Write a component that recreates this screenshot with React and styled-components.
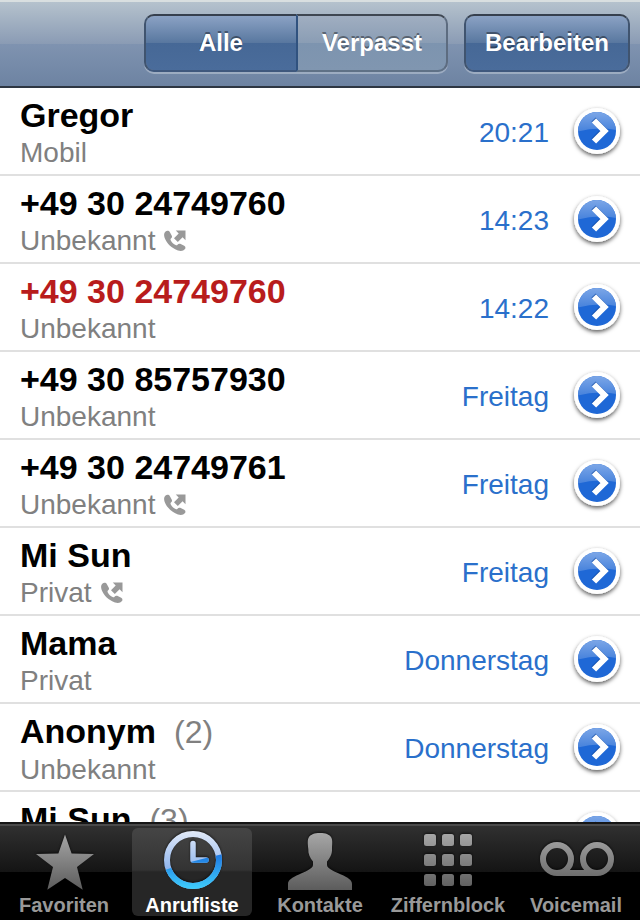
import React, { useState } from 'react'
import styled, { createGlobalStyle } from 'styled-components'

const GlobalStyle = createGlobalStyle`
  * {
    box-sizing: border-box;
  }
  body {
    margin: 0;
    background: #fff;
    font-family: "Liberation Sans", Arial, sans-serif;
  }
  button {
    margin: 0;
    padding: 0;
    border: 0;
    background: none;
    font-family: inherit;
    cursor: pointer;
  }
`

const Screen = styled.div`
  display: flex;
  flex-direction: column;
  height: 100vh;
`

const Toolbar = styled.header`
  display: flex;
  justify-content: flex-end;
  gap: 16px;
  padding: 12px 10px 14px;
  border-top: 2px solid #d9dfe0;
  border-bottom: 2px solid #2d3642;
  background: linear-gradient(#b5c2cd 0%, #8a9bb4 50%, #7f93b0 50%, #6d83a2 100%);
`

const glossyBlue = 'linear-gradient(#8ba2c4 0%, #58779f 50%, #466896 50%, #4a6c9b 100%)'
const glossyGrey = 'linear-gradient(#a0aec1 0%, #8a9db4 50%, #7d94af 50%, #8096b0 100%)'

const Segments = styled.div`
  display: flex;
  border-radius: 10px;
  box-shadow: 0 2px 0 rgba(255, 255, 255, 0.3);
`

const ToolbarButton = styled.button`
  height: 58px;
  padding: 0 19px;
  border: 2px solid;
  border-color: #36404e #40546f #3f587d;
  border-radius: 10px;
  background: ${glossyBlue} padding-box;
  box-shadow: 0 2px 0 rgba(255, 255, 255, 0.3);
  color: #fff;
  font-size: 24px;
  font-weight: bold;
  line-height: 54px;
  text-shadow: 0 -2px 0 rgba(0, 0, 0, 0.4);
`

const Segment = styled(ToolbarButton)`
  width: 152px;
  padding: 0;
  background: ${props => (props.$active ? glossyBlue : glossyGrey)} padding-box;
  border-color: ${props => (props.$active ? '#36404e #40546f #3f587d' : '#3f4752 #5d6c80 #5f7186')};
  box-shadow: none;

  &:first-child {
    border-right: 0;
    border-radius: 10px 0 0 10px;
  }
  &:last-child {
    border-left: 2px solid #30527f;
    border-radius: 0 10px 10px 0;
  }
`

const CallList = styled.ul`
  flex: 1;
  min-height: 0;
  margin: 0;
  padding: 0;
  overflow: hidden;
  list-style: none;
`

const CallRow = styled.li`
  display: flex;
  align-items: center;
  height: 88px;
  padding: 0 19px 0 20px;
  border-bottom: 2px solid #e0e0e0;
`

const Caller = styled.div`
  flex: 1;
  padding-top: 6px;
`

const Name = styled.div`
  display: flex;
  align-items: baseline;
  gap: 18px;
  color: ${props => (props.$missed ? '#b81c1c' : '#000')};
  font-size: 34px;
  font-weight: bold;
  line-height: 38px;
`

const Count = styled.span`
  color: #808080;
  font-size: 32px;
  font-weight: normal;
`

const Kind = styled.div`
  display: flex;
  align-items: center;
  gap: 9px;
  color: #808080;
  font-size: 28px;
  line-height: 38px;
`

const Time = styled.time`
  padding-top: 4px;
  color: #2a70cb;
  font-size: 28px;
  line-height: 32px;
`

const DetailButton = styled.button`
  display: flex;
  align-items: center;
  justify-content: center;
  width: 48px;
  height: 48px;
  margin-left: 24px;
`

const TabBar = styled.nav`
  display: flex;
  height: 98px;
  padding-top: 2px;
  border-top: 2px solid #161616;
  background: linear-gradient(#4a4a4a 0 2px, #303030 2px, #141414 48px, #000 48px);
`

const Tab = styled.button`
  display: flex;
  flex: 1;
  flex-direction: column;
  align-items: center;
  justify-content: flex-start;
  height: 88px;
  margin: 2px 4px 0;
  border-radius: 6px;
  background: ${props => (props.$active ? 'linear-gradient(#454545 0, #333 42px, #262626 44px, #262626 100%)' : 'none')};
  color: ${props => (props.$active ? '#fff' : '#999')};
  font-size: 20px;
  font-weight: bold;
  line-height: 26px;
`

const TabIcon = styled.svg`
  display: block;
  flex: none;
  width: 80px;
  height: 64px;
  overflow: visible;
  filter: drop-shadow(0 -1px 1px rgba(0, 0, 0, 0.6));
`

const calls = [
  { name: 'Gregor', kind: 'Mobil', time: '20:21' },
  { name: '+49 30 24749760', kind: 'Unbekannt', time: '14:23', outgoing: true },
  { name: '+49 30 24749760', kind: 'Unbekannt', time: '14:22', missed: true },
  { name: '+49 30 85757930', kind: 'Unbekannt', time: 'Freitag' },
  { name: '+49 30 24749761', kind: 'Unbekannt', time: 'Freitag', outgoing: true },
  { name: 'Mi Sun', kind: 'Privat', time: 'Freitag', outgoing: true },
  { name: 'Mama', kind: 'Privat', time: 'Donnerstag' },
  { name: 'Anonym', count: 2, kind: 'Unbekannt', time: 'Donnerstag' },
  { name: 'Mi Sun', count: 3, kind: 'Privat', time: 'Donnerstag' },
]

const OutgoingIcon = () => (
  <svg width="22" height="22" viewBox="0 0 22 22" fill="#999" role="img" aria-label="Ausgehend">
    <path d="M1.6 1.5 C3 .4 5.2 .8 5.9 2.2 L7.8 5.8 C8.3 6.9 7.9 7.8 6.9 8.5 C6.4 9 6.4 9.6 6.8 10.4 C7.9 12.4 9.6 14 11.6 15 C12.4 15.4 13 15.3 13.5 14.7 C14.3 13.7 15.2 13.4 16.2 13.8 L20.2 15.8 C21.5 16.5 21.8 18 21 19.1 C19.4 21.1 16.8 21.4 14 20.5 C7.8 18.3 2.6 13.4 .6 7.8 C-.3 5.2 0 2.8 1.6 1.5 Z" />
    <path d="M11.8 .5 H21.5 V10.2 L18.6 7.3 L13.8 12 L10 8.2 L14.7 3.4 Z" />
  </svg>
)

const DetailIcon = () => (
  <svg width="48" height="48" viewBox="0 0 48 48" overflow="visible" aria-hidden="true">
    <defs>
      <linearGradient id="gloss" x1="0" y1="0" x2="0" y2="1">
        <stop offset="0" stopColor="#8ab0ea" />
        <stop offset="1" stopColor="#427fdb" />
      </linearGradient>
      <clipPath id="disc">
        <circle cx="24" cy="24" r="19" />
      </clipPath>
      <filter id="shade" x="-30%" y="-30%" width="160%" height="170%">
        <feDropShadow dx="0" dy="2" stdDeviation="2" floodColor="#000" floodOpacity="0.65" />
      </filter>
    </defs>
    <circle cx="24" cy="24" r="23" fill="#fff" filter="url(#shade)" />
    <circle cx="24" cy="24" r="19" fill="#1f68d6" />
    <path d="M0 0 H48 V24 Q24 18 0 26 Z" fill="url(#gloss)" clipPath="url(#disc)" />
    <path d="M20.5 12.5 L31 23 L20.5 33.5" fill="none" stroke="#134a9f" strokeOpacity="0.6" strokeWidth="6" />
    <path d="M21 13.5 L31.5 24 L21 34.5" fill="none" stroke="#fff" strokeWidth="6" />
  </svg>
)

const StarIcon = () => (
  <path
    fill="url(#tabGrey)"
    d="M41 6.5 L47.6 25.6 L70 26 L53 39 L58.7 61.7 L41 50 L23.3 61.7 L29 39 L12 26 L34.4 25.6 Z"
  />
)

const ClockIcon = () => (
  <g fill="none" strokeLinecap="round" strokeLinejoin="round">
    <clipPath id="clockLower">
      <path d="M0 46.5 Q34 33.5 80 24 V72 H0 Z" />
    </clipPath>
    <g stroke="url(#clockLight)" strokeWidth="6">
      <circle cx="41" cy="32" r="26" />
      <path d="M41 15.5 V32 H54" strokeWidth="5.5" />
    </g>
    <g stroke="url(#clockBlue)" strokeWidth="6" clipPath="url(#clockLower)">
      <circle cx="41" cy="32" r="26" />
      <path d="M41 15.5 V32 H54" strokeWidth="5.5" />
    </g>
  </g>
)

const PersonIcon = () => (
  <path
    fill="url(#tabGrey)"
    d="M40 5 C46 5 49 6.5 51 9 C53 12 52 17 52 21 C52.3 26 50 30 47 33.5 V37 C47 41 56 44 61 46.5 C68 49.5 72 52 72 56 V62 H8 V56 C8 52 12 49.5 19 46.5 C24 44 33 41 33 37 V33.5 C30 30 28 26 28.3 21 C28 17 27 12 29 9 C31 6.5 34 5 40 5 Z"
  />
)

const KeypadIcon = () => (
  <g fill="url(#tabGrey)">
    {[6, 26, 46].map(y =>
      [16, 34, 52].map(x => <rect key={x + '-' + y} x={x} y={y} width="12" height="12" rx="2.5" />)
    )}
  </g>
)

const VoicemailIcon = () => (
  <g fill="none" stroke="url(#tabGrey)" strokeWidth="6">
    <circle cx="21" cy="31" r="14" />
    <circle cx="61" cy="31" r="14" />
    <path d="M21 42 H61 V48 H21 Z" fill="url(#tabGrey)" stroke="none" />
  </g>
)

const tabs = [
  { label: 'Favoriten', Icon: StarIcon },
  { label: 'Anrufliste', Icon: ClockIcon },
  { label: 'Kontakte', Icon: PersonIcon },
  { label: 'Ziffernblock', Icon: KeypadIcon },
  { label: 'Voicemail', Icon: VoicemailIcon },
]

// gradients shared by the tab icons, in the 80x64 icon space
const TabGradients = () => (
  <defs>
    <linearGradient id="tabGrey" gradientUnits="userSpaceOnUse" x1="0" y1="4" x2="0" y2="62">
      <stop offset="0" stopColor="#a8a8a8" />
      <stop offset="1" stopColor="#5c5c5c" />
    </linearGradient>
    <linearGradient id="clockLight" gradientUnits="userSpaceOnUse" x1="0" y1="3" x2="0" y2="42">
      <stop offset="0" stopColor="#e2eaf8" />
      <stop offset="1" stopColor="#8db4ee" />
    </linearGradient>
    <linearGradient id="clockBlue" gradientUnits="userSpaceOnUse" x1="0" y1="24" x2="0" y2="61">
      <stop offset="0" stopColor="#1b72e0" />
      <stop offset="1" stopColor="#3fcdfb" />
    </linearGradient>
  </defs>
)

const App = () => {
  const [filter, setFilter] = useState('Alle')
  const [tab, setTab] = useState('Anrufliste')

  return (
    <Screen>
      <GlobalStyle />
      <Toolbar>
        <Segments>
          {['Alle', 'Verpasst'].map(item =>
            <Segment key={item} $active={item === filter} onClick={() => setFilter(item)}>
              {item}
            </Segment>
          )}
        </Segments>
        <ToolbarButton>Bearbeiten</ToolbarButton>
      </Toolbar>
      <CallList>
        {calls.filter(call => filter === 'Alle' || call.missed).map((call, i) =>
          <CallRow key={i}>
            <Caller>
              <Name $missed={call.missed}>
                {call.name}
                {call.count && <Count>({call.count})</Count>}
              </Name>
              <Kind>
                {call.kind}
                {call.outgoing && <OutgoingIcon />}
              </Kind>
            </Caller>
            <Time>{call.time}</Time>
            <DetailButton aria-label={'Details zu ' + call.name}>
              <DetailIcon />
            </DetailButton>
          </CallRow>
        )}
      </CallList>
      <TabBar>
        {tabs.map(({ label, Icon }) =>
          <Tab key={label} $active={label === tab} onClick={() => setTab(label)}>
            <TabIcon viewBox="0 0 80 64" aria-hidden="true">
              <TabGradients />
              <Icon />
            </TabIcon>
            {label}
          </Tab>
        )}
      </TabBar>
    </Screen>
  )
}

export default App
